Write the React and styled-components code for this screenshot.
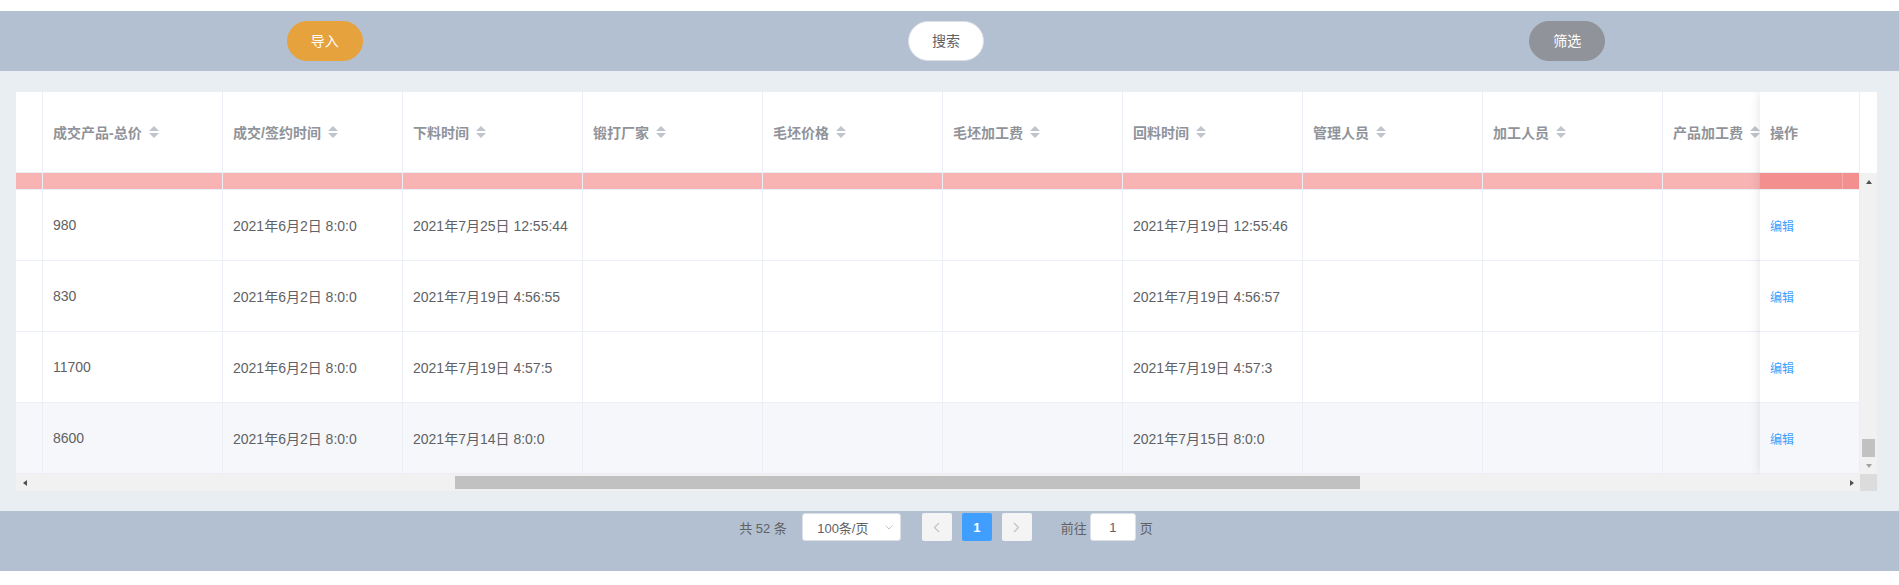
import React from 'react';
import styled, { createGlobalStyle } from 'styled-components';

const GlobalStyle = createGlobalStyle`
  html, body {
    margin: 0;
    padding: 0;
    background: #fff;
  }
  body {
    font-family: "Liberation Sans", "Noto Sans CJK SC", sans-serif;
  }
  * {
    box-sizing: border-box;
  }
`

const Page = styled.div`
  padding-top: 11px;
`

const Band = styled.div`
  height: 60px;
  background: #b3c0d1;
  padding: 0 21px 0 14px;
`

const Toolbar = styled(Band)`
  display: grid;
  grid-template-columns: repeat(3, 1fr);
  align-items: center;
  justify-items: center;
`

const tones = {
    warning: { bg: '#e6a23c', border: '#e6a23c', color: '#fff' },
    plain: { bg: '#fff', border: '#dcdfe6', color: '#606266' },
    info: { bg: '#909399', border: '#909399', color: '#fff' },
}

const RoundButton = styled.button`
    height: 40px;
    padding: 0 23px;
    border-radius: 20px;
    border: 1px solid ${p => tones[p.$tone].border};
    background: ${p => tones[p.$tone].bg};
    color: ${p => tones[p.$tone].color};
    font-family: inherit;
    font-size: 14px;
    line-height: 1;
    cursor: pointer;
`

const Main = styled.main`
  background: #e9eef3;
  padding: 21px 22px 20px 16px;
`

const TableFrame = styled.div`
  display: flex;
  flex-direction: column;
  background: #fff;
`

const TopArea = styled.div`
  display: flex;
`

const GridArea = styled.div`
  position: relative;
  flex: 0 0 1844px;
  width: 1844px;
  overflow: hidden;
`

const Row = styled.div`
  display: flex;
  height: ${p => p.$h}px;
  border-bottom: 1px solid #ebeef5;
  background: ${p => p.$bg || '#fff'};
`

const Cell = styled.div`
  flex: 0 0 ${p => p.$w}px;
  width: ${p => p.$w}px;
  border-right: 1px solid #ebeef5;
  padding: 0 10px;
  display: flex;
  align-items: center;
  white-space: nowrap;
  overflow: hidden;
  font-size: 14px;
  color: #606266;
`

const HeadCell = styled(Cell)`
  font-weight: bold;
  color: #909399;
`

const Caret = styled.span`
  display: inline-flex;
  flex-direction: column;
  gap: 2px;
  margin-left: 7px;

  &::before, &::after {
    content: "";
    border-left: 5px solid transparent;
    border-right: 5px solid transparent;
  }
  &::before {
    border-bottom: 5px solid #c0c4cc;
  }
  &::after {
    border-top: 5px solid #c0c4cc;
  }
`

const FixedCol = styled.div`
  position: absolute;
  top: 0;
  right: 0;
  bottom: 0;
  width: 100px;
  display: flex;
  flex-direction: column;
  background: #fff;
  box-shadow: 0 0 10px rgba(0, 0, 0, .12);
`

const FixedCell = styled.div`
  height: ${p => p.$h}px;
  flex: 0 0 ${p => p.$h}px;
  border-bottom: 1px solid #ebeef5;
  border-right: 1px solid #ebeef5;
  padding: 0 10px;
  display: flex;
  align-items: center;
  background: ${p => p.$bg || '#fff'};
`

const FixedHead = styled(FixedCell)`
  font-size: 14px;
  font-weight: bold;
  color: #909399;
`

const FixedPink = styled(FixedCell)`
  background: linear-gradient(to right, #f48f8f 82px, #f7abab 82px, #f7abab 83px, #f48f8f 83px);
`

const EditLink = styled.a`
  font-size: 12px;
  color: #409eff;
  text-decoration: none;
  cursor: pointer;
`

const SideColumn = styled.div`
  flex: 0 0 17px;
  display: flex;
  flex-direction: column;
`

const Gutter = styled.div`
  height: 81px;
  background: #fff;
`

const VScroll = styled.div`
  flex: 1;
  display: flex;
  flex-direction: column;
  background: #f1f1f1;
`

const ArrowBox = styled.div`
  flex: 0 0 17px;
  height: 17px;
  display: flex;
  align-items: center;
  justify-content: center;
`

const Triangle = styled.span`
  width: 0;
  height: 0;
  ${p => p.$dir === 'up' && `
    border-left: 3.5px solid transparent;
    border-right: 3.5px solid transparent;
    border-bottom: 4px solid ${p.$color};
  `}
  ${p => p.$dir === 'down' && `
    border-left: 3.5px solid transparent;
    border-right: 3.5px solid transparent;
    border-top: 4px solid ${p.$color};
  `}
  ${p => p.$dir === 'left' && `
    border-top: 3.5px solid transparent;
    border-bottom: 3.5px solid transparent;
    border-right: 4px solid ${p.$color};
  `}
  ${p => p.$dir === 'right' && `
    border-top: 3.5px solid transparent;
    border-bottom: 3.5px solid transparent;
    border-left: 4px solid ${p.$color};
  `}
`

const VTrack = styled.div`
  flex: 1;
  display: flex;
  flex-direction: column;
  justify-content: flex-end;
  padding: 0 2px;
`

const VThumb = styled.div`
  height: 18px;
  background: #c1c1c1;
`

const BottomArea = styled.div`
  display: flex;
  height: 17px;
`

const HScroll = styled.div`
  flex: 0 0 1844px;
  display: flex;
  background: #f1f1f1;
`

const HTrack = styled.div`
  flex: 1;
  display: flex;
  align-items: center;
`

const HThumb = styled.div`
  height: 13px;
  background: #c1c1c1;
`

const Corner = styled.div`
  flex: 0 0 17px;
  background: #dcdcdc;
`

const Footer = styled(Band)`
  display: flex;
  justify-content: center;
  align-items: flex-start;
  padding-top: 2px;
`

const Pager = styled.div`
  display: flex;
  align-items: center;
  height: 28px;
  font-size: 13px;
  color: #606266;
`

const Total = styled.span`
  margin-right: 15px;
`

const SizeSelect = styled.div`
  width: 99px;
  height: 28px;
  margin-right: 16px;
  display: flex;
  align-items: center;
  padding: 0 7px 0 8px;
  border: 1px solid #dcdfe6;
  border-radius: 3px;
  background: #fff;

  & > span {
    flex: 1;
    text-align: center;
  }
  & > svg {
    margin-left: 10px;
  }
`

const PageBtn = styled.button`
  min-width: 30px;
  height: 28px;
  margin: 0 5px;
  padding: 0;
  border: none;
  border-radius: 2px;
  display: flex;
  align-items: center;
  justify-content: center;
  font-family: inherit;
  font-size: 13px;
  font-weight: bold;
  background: ${p => p.$active ? '#409eff' : '#f4f4f5'};
  color: ${p => p.$active ? '#fff' : '#c0c4cc'};
`

const Jumper = styled.span`
  margin-left: 24px;
  display: flex;
  align-items: center;
`

const JumpInput = styled.div`
  width: 46px;
  height: 28px;
  margin: 0 4px 0 3px;
  border: 1px solid #dcdfe6;
  border-radius: 3px;
  background: #fff;
  display: flex;
  align-items: center;
  justify-content: center;
`

// first column is scrolled mostly out of view; the last one sits under the fixed column
const columns = [
    { w: 27 },
    { title: '成交产品-总价' },
    { title: '成交/签约时间' },
    { title: '下料时间' },
    { title: '锻打厂家' },
    { title: '毛坯价格' },
    { title: '毛坯加工费' },
    { title: '回料时间' },
    { title: '管理人员' },
    { title: '加工人员' },
    { title: '产品加工费' },
    {},
].map(c => ({ w: 180, ...c }))

const rows = [
    ['', '980', '2021年6月2日 8:0:0', '2021年7月25日 12:55:44', '', '', '', '2021年7月19日 12:55:46'],
    ['', '830', '2021年6月2日 8:0:0', '2021年7月19日 4:56:55', '', '', '', '2021年7月19日 4:56:57'],
    ['', '11700', '2021年6月2日 8:0:0', '2021年7月19日 4:57:5', '', '', '', '2021年7月19日 4:57:3'],
    ['', '8600', '2021年6月2日 8:0:0', '2021年7月14日 8:0:0', '', '', '', '2021年7月15日 8:0:0'],
]

const HOVER = '#f5f7fa'

// horizontal scroll state of the body
const track = 1844 - 34
const thumbLeft = 455 - 16 - 17
const thumbWidth = 905

const Chevron = ({ dir }) => (
    <svg width="7" height="11" viewBox="0 0 7 11">
        <polyline
            points={dir === 'left' ? '6,1 1.5,5.5 6,10' : '1,1 5.5,5.5 1,10'}
            fill="none" stroke="#c0c4cc" strokeWidth="1.3" />
    </svg>
)

export default function App() {
    return (
        <Page>
            <GlobalStyle />
            <Toolbar>
                <RoundButton $tone="warning">导入</RoundButton>
                <RoundButton $tone="plain">搜索</RoundButton>
                <RoundButton $tone="info">筛选</RoundButton>
            </Toolbar>
            <Main>
                <TableFrame>
                    <TopArea>
                        <GridArea>
                            <Row $h={81}>
                                {columns.map((c, i) => (
                                    <HeadCell key={i} $w={c.w}>
                                        {c.title}
                                        {c.title && <Caret />}
                                    </HeadCell>
                                ))}
                            </Row>
                            <Row $h={17} $bg="#f8b3b3">
                                {columns.map((c, i) => <Cell key={i} $w={c.w} />)}
                            </Row>
                            {rows.map((r, ri) => (
                                <Row key={ri} $h={71} $bg={ri === 3 ? HOVER : '#fff'}>
                                    {columns.map((c, i) => <Cell key={i} $w={c.w}>{r[i]}</Cell>)}
                                </Row>
                            ))}
                            <FixedCol>
                                <FixedHead $h={81}>操作</FixedHead>
                                <FixedPink $h={17} />
                                {rows.map((r, ri) => (
                                    <FixedCell key={ri} $h={71} $bg={ri === 3 ? HOVER : '#fff'}>
                                        <EditLink>编辑</EditLink>
                                    </FixedCell>
                                ))}
                            </FixedCol>
                        </GridArea>
                        <SideColumn>
                            <Gutter />
                            <VScroll>
                                <ArrowBox><Triangle $dir="up" $color="#505050" /></ArrowBox>
                                <VTrack><VThumb /></VTrack>
                                <ArrowBox><Triangle $dir="down" $color="#a3a3a3" /></ArrowBox>
                            </VScroll>
                        </SideColumn>
                    </TopArea>
                    <BottomArea>
                        <HScroll>
                            <ArrowBox><Triangle $dir="left" $color="#505050" /></ArrowBox>
                            <HTrack>
                                <HThumb style={{ marginLeft: thumbLeft, width: Math.min(thumbWidth, track) }} />
                            </HTrack>
                            <ArrowBox><Triangle $dir="right" $color="#505050" /></ArrowBox>
                        </HScroll>
                        <Corner />
                    </BottomArea>
                </TableFrame>
            </Main>
            <Footer>
                <Pager>
                    <Total>共 52 条</Total>
                    <SizeSelect>
                        <span>100条/页</span>
                        <svg width="8" height="5" viewBox="0 0 8 5">
                            <polyline points="0.5,0.5 4,4 7.5,0.5" fill="none" stroke="#c0c4cc" strokeWidth="1" />
                        </svg>
                    </SizeSelect>
                    <PageBtn><Chevron dir="left" /></PageBtn>
                    <PageBtn $active>1</PageBtn>
                    <PageBtn><Chevron dir="right" /></PageBtn>
                    <Jumper>
                        前往
                        <JumpInput>1</JumpInput>
                        页
                    </Jumper>
                </Pager>
            </Footer>
        </Page>
    )
}
